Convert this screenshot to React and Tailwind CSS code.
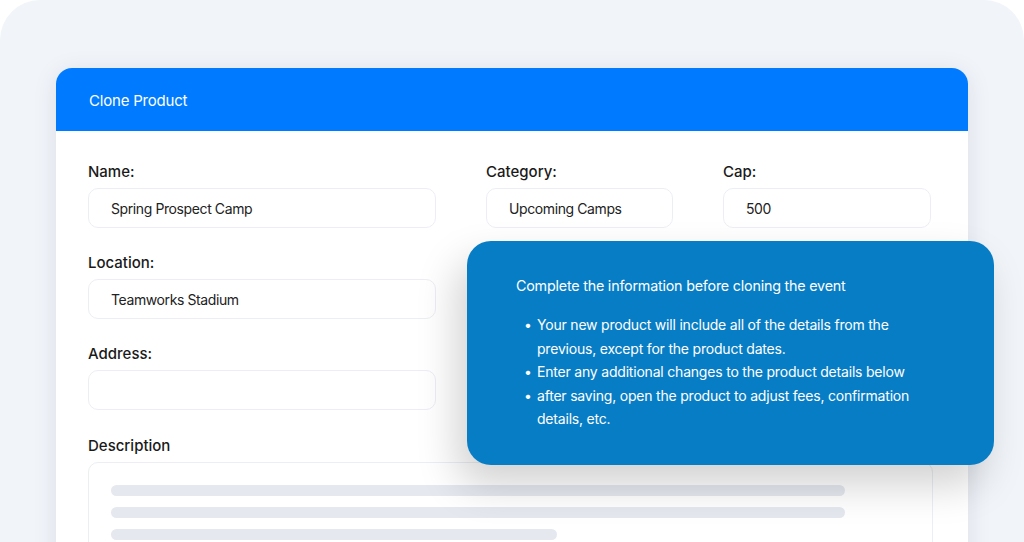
import React from 'react';

function Field({ label, value, className = '' }) {
    return (
        <div className={className}>
            <label className="block text-[15px] font-medium text-[#1a1a1a] leading-5 mb-[6px]">{label}</label>
            <div className="h-[40px] border border-[#eceef3] rounded-[10px] px-[22px] flex items-center text-[14px] tracking-[-0.4px] text-[#222]">
                {value}
            </div>
        </div>
    );
}

export default function App() {
    const notes = [
        'Your new product will include all of the details from the previous, except for the product dates.',
        'Enter any additional changes to the product details below',
        'after saving, open the product to adjust fees, confirmation details, etc.',
    ];

    return (
        <div className="w-[1024px] h-[542px] bg-white overflow-hidden" style={{ fontFamily: 'Inter, "Noto Sans", sans-serif' }}>
            <div className="relative h-full bg-[#f1f4f9] rounded-t-[40px] pt-[68px] px-[56px]">
                <div className="w-[912px] h-[500px] bg-white rounded-t-[16px] overflow-hidden shadow-[0_4px_24px_rgba(30,40,70,0.10)]">
                    <div className="h-[63px] bg-[#007bff] flex items-center px-[33px] pt-[3px] text-white text-[15px] tracking-[-0.2px]">
                        Clone Product
                    </div>
                    <div className="px-[32px] pt-[31px]">
                        <div className="flex">
                            <Field label="Name:" value="Spring Prospect Camp" className="w-[348px]" />
                            <Field label="Category:" value="Upcoming Camps" className="w-[187px] ml-[50px]" />
                            <Field label="Cap:" value="500" className="w-[208px] ml-[50px]" />
                        </div>
                        <Field label="Location:" value="Teamworks Stadium" className="w-[348px] mt-[25px]" />
                        <Field label="Address:" value="" className="w-[348px] mt-[25px]" />
                        <div className="mt-[26px]">
                            <label className="block text-[15px] font-medium text-[#1a1a1a] leading-5 mb-[6px]">Description</label>
                            <div className="w-[845px] h-[120px] border border-[#eceef3] rounded-[10px] px-[22px] pt-[22px] flex flex-col gap-[11px]">
                                <div className="h-[11px] w-[734px] rounded-full bg-[#e5e8ef]" />
                                <div className="h-[11px] w-[734px] rounded-full bg-[#e5e8ef]" />
                                <div className="h-[11px] w-[446px] rounded-full bg-[#e5e8ef]" />
                            </div>
                        </div>
                    </div>
                </div>

                <div className="absolute left-[467px] top-[241px] w-[527px] h-[224px] bg-[#077dc5] rounded-[24px] text-white pl-[49px] pt-[35px] shadow-[-10px_20px_40px_rgba(0,0,0,0.18)]">
                    <p className="text-[14.3px] leading-5 tracking-[-0.2px]">Complete the information before cloning the event</p>
                    <ul className="mt-[17px] pl-[8px] pr-[60px] text-[14px] leading-[23.5px] tracking-[-0.2px]">
                        {notes.map((n) => (
                            <li key={n} className="flex">
                                <span className="w-[13px] shrink-0">•</span>
                                <span>{n}</span>
                            </li>
                        ))}
                    </ul>
                </div>
            </div>
        </div>
    );
}
